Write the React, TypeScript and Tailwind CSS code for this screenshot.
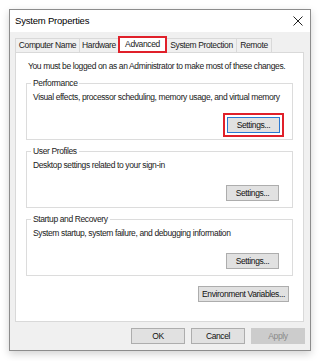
import React from 'react';

function Btn({ label, className = '', disabled = false }: { label: string; className?: string; disabled?: boolean }) {
  return (
    <div
      className={`h-[16px] flex items-center justify-center border whitespace-nowrap ${
        disabled ? 'border-[#cccccc] bg-[#cccccc] text-[#8a8a8a]' : 'border-[#adadad] bg-[#e1e1e1] text-[#111]'
      } ${className}`}
    >
      {label}
    </div>
  );
}

function Group({ title, text, highlight = false }: { title: string; text: string; highlight?: boolean }) {
  return (
    <div className="relative mx-[10px] border border-[#dcdcdc] h-[57px] px-[6px]">
      {/* legend sits on the border */}
      <div className="absolute -top-[7px] left-[4px] bg-white px-[2px] leading-[12px]">{title}</div>
      <div className="pt-[7px] leading-[12px]">{text}</div>
      <div className="flex justify-end pr-[7px] mt-[14px]">
        {highlight ? (
          <div className="border-2 border-[#e0202a] p-[2px] -mr-[5px] -mt-[4px]">
            <Btn label="Settings..." className="w-[53px] !border-[#2a78d2]" />
          </div>
        ) : (
          <Btn label="Settings..." className="w-[53px]" />
        )}
      </div>
    </div>
  );
}

export default function App() {
  const tabs = [
    { t: 'Computer Name', w: 'w-[65px]' },
    { t: 'Hardware', w: 'w-[40px]' },
    { t: 'Advanced', w: 'w-[49px]' },
    { t: 'System Protection', w: 'w-[71px]' },
    { t: 'Remote', w: 'w-[36px]' },
  ];

  return (
    <div
      className="w-[320px] h-[361px] bg-white pt-[9px] pl-[9px] text-[8.5px] tracking-[-0.38px] text-[#1a1a1a] whitespace-nowrap"
      style={{ fontFamily: '"Liberation Sans", Arial, sans-serif' }}
    >
      <div className="w-[302px] h-[342px] border border-[#8c8c8c] bg-[#f0f0f0] shadow-[0_3px_8px_rgba(0,0,0,0.18)] flex flex-col">
        {/* title bar */}
        <div className="h-[22px] bg-white flex items-center justify-between pl-[5px] pr-[6px]">
          <span className="text-[9.5px] tracking-[-0.2px] text-black">System Properties</span>
          <svg width="10" height="10" viewBox="0 0 10 10" className="mr-[1px]">
            <path d="M0.5 0.5 L9.5 9.5 M9.5 0.5 L0.5 9.5" stroke="#222" strokeWidth="1" />
          </svg>
        </div>

        {/* tabs */}
        <div className="px-[5px] pr-[6px] pt-[4px]">
          <div className="flex items-end h-[16px] pl-[1px]">
            {tabs.map(({ t, w }) =>
              t === 'Advanced' ? (
                <div
                  key={t}
                  className={`${w} h-[17px] -mb-[1px] -ml-[1px] bg-white border-2 border-[#e0202a] flex items-center justify-center z-10`}
                >
                  {t}
                </div>
              ) : (
                <div
                  key={t}
                  className={`${w} h-[14px] bg-[#f0f0f0] border border-[#d9d9d9] border-b-0 -ml-[1px] flex items-center justify-center`}
                >
                  {t}
                </div>
              )
            )}
          </div>

          <div className="h-[270px] bg-white border border-[#d9d9d9] flex flex-col">
            <div className="pl-[12px] pt-[7px] leading-[12px]">
              You must be logged on as an Administrator to make most of these changes.
            </div>
            <div className="mt-[11px] flex flex-col gap-[11px]">
              <Group
                title="Performance"
                text="Visual effects, processor scheduling, memory usage, and virtual memory"
                highlight
              />
              <Group title="User Profiles" text="Desktop settings related to your sign-in" />
              <Group title="Startup and Recovery" text="System startup, system failure, and debugging information" />
            </div>
            <div className="flex justify-end pr-[14px] mt-[10px]">
              <Btn label="Environment Variables..." className="w-[91px]" />
            </div>
          </div>
        </div>

        {/* bottom buttons */}
        <div className="flex justify-end gap-[6px] pr-[5px] mt-[6px]">
          <Btn label="OK" className="w-[54px]" />
          <Btn label="Cancel" className="w-[54px]" />
          <Btn label="Apply" className="w-[54px]" disabled />
        </div>
      </div>
    </div>
  );
}
